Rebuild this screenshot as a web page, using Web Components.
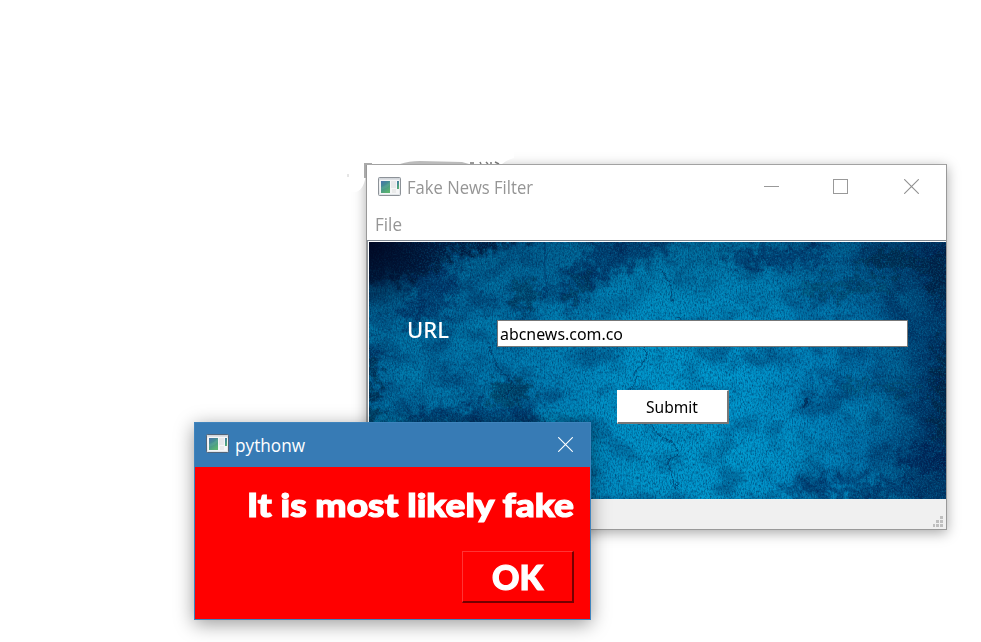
<!DOCTYPE html>
<html lang="en">
<head>
<meta charset="utf-8">
<title>Fake News Filter</title>
<style>
html, body { margin: 0; width: 981px; height: 642px; overflow: hidden; background: #fff; }
</style>
</head>
<body>
<filter-desktop></filter-desktop>
<script>
const define = (name, html, after) => customElements.define(name, class extends HTMLElement {
  connectedCallback() {
    if (this.shadowRoot) return;
    const t = document.createElement('template');
    t.innerHTML = html;
    this.attachShadow({ mode: 'open' }).append(t.content.cloneNode(true));
    if (after) after(this);
  }
});

/* Text scaled horizontally to the width given by its "w" attribute. */
define('fit-text', `<style>
  :host { display: block; white-space: nowrap; flex: none; }
  span { display: inline-block; transform-origin: 0 50%; }
</style><span><slot></slot></span>`, el => {
  const w = +el.getAttribute('w');
  el.style.width = w + 'px';
  const s = el.shadowRoot.querySelector('span');
  s.style.transform = 'scaleX(' + w / s.getBoundingClientRect().width + ')';
});

define('app-icon', `<style>:host { display: block; flex: none; width: 23px; height: 19px; } svg { display: block; }</style>
<svg width="23" height="19" viewBox="0 0 23 19">
  <defs><linearGradient id="g" x1="0" y1="0" x2=".6" y2="1"><stop offset="0" stop-color="#4872ad"/><stop offset=".5" stop-color="#45928d"/><stop offset="1" stop-color="#5bb371"/></linearGradient>
  <linearGradient id="f" x1="0" y1="0" x2="0" y2="1"><stop offset="0" stop-color="#c9ced4"/><stop offset=".25" stop-color="#f5f5f5"/><stop offset="1" stop-color="#dfe3e7"/></linearGradient></defs>
  <rect x=".5" y=".5" width="22" height="18" rx="1" fill="url(#f)" stroke="var(--frame, #8d9298)"/>
  <rect x="2" y="3" width="19" height="14" fill="#f5f6f7"/>
  <rect x="3" y="4" width="9" height="12" fill="url(#g)"/>
  <path d="M3 10Q8 9 12 4V8Q8 12 3 13Z" fill="#79bba2" opacity=".25"/>
  <rect x="13" y="4" width="5" height="7" fill="#e6e8e9"/><rect x="14" y="12" width="4" height="4" fill="#e9eaea"/>
  <rect x="19" y="4" width="2" height="8" fill="url(#g)"/>
</svg>`);

define('window-close', `<style>:host { display: block; flex: none; width: 15px; height: 15px; } svg { display: block; }</style>
<svg width="15" height="15" viewBox="0 0 15 15"><path d="M.2 .2L14.8 14.8M14.8 .2L.2 14.8" stroke="currentColor" stroke-width="1.1"/></svg>`);

define('window-controls', `<style>
  :host { display: flex; align-items: center; gap: 54px; color: #909090; }
  i { display: block; width: 15px; height: 15px; box-sizing: border-box; }
  .min { background: linear-gradient(#999, #999) 0 7px / 15px 1px no-repeat; }
  .max { border: 1px solid #999; }
  window-close { margin-left: 2px; }
</style><i class="min"></i><i class="max"></i><window-close></window-close>`);

define('grunge-backdrop', `<style>:host { display: block; } svg { display: block; }</style>
<svg width="577" height="257" viewBox="0 0 577 257">
  <defs>
    <linearGradient id="base"><stop offset="0" stop-color="#006798"/><stop offset=".3" stop-color="#007bb0"/><stop offset=".5" stop-color="#0094c8"/><stop offset=".64" stop-color="#0096cc"/><stop offset=".8" stop-color="#007cb4"/><stop offset="1" stop-color="#005084"/></linearGradient>
    <linearGradient id="top" x1="0" y1="0" x2="0" y2="1"><stop offset="0" stop-color="#002348" stop-opacity=".4"/><stop offset=".25" stop-color="#002348" stop-opacity=".12"/><stop offset=".5" stop-color="#002348" stop-opacity="0"/></linearGradient>
    <linearGradient id="right"><stop offset=".86" stop-color="#001b45" stop-opacity="0"/><stop offset="1" stop-color="#001b45" stop-opacity=".5"/></linearGradient>
    <radialGradient id="corner" gradientUnits="userSpaceOnUse" cx="0" cy="0" r="75"><stop offset="0" stop-color="#000620" stop-opacity=".9"/><stop offset=".4" stop-color="#000a26" stop-opacity=".65"/><stop offset="1" stop-color="#000a26" stop-opacity="0"/></radialGradient>
    <filter id="blotch" x="0" y="0" width="100%" height="100%" color-interpolation-filters="sRGB"><feTurbulence type="fractalNoise" baseFrequency=".035 .04" numOctaves="6" seed="8"/><feColorMatrix values="0 0 0 0 0  0 0 0 0 .1  0 0 0 0 .28  3.4 0 0 0 -1.5"/></filter>
    <filter id="light" x="0" y="0" width="100%" height="100%" color-interpolation-filters="sRGB"><feTurbulence type="fractalNoise" baseFrequency=".02 .026" numOctaves="6" seed="21"/><feColorMatrix values="0 0 0 0 .02  0 0 0 0 .62  0 0 0 0 .8  0 3 0 0 -1.35"/></filter>
    <filter id="grain" x="0" y="0" width="100%" height="100%" color-interpolation-filters="sRGB"><feTurbulence type="fractalNoise" baseFrequency=".73 .37" numOctaves="2" seed="3"/><feColorMatrix values="0 0 0 0 0  0 0 0 0 .12  0 0 0 0 .3  2 0 0 0 -.8"/></filter>
    <filter id="spark" x="0" y="0" width="100%" height="100%" color-interpolation-filters="sRGB"><feTurbulence type="fractalNoise" baseFrequency=".67 .57" numOctaves="2" seed="17"/><feColorMatrix values="0 0 0 0 .04  0 0 0 0 .7  0 0 0 0 .9  0 2 0 0 -.88"/></filter>
    <filter id="rough" x="-30%" y="-30%" width="160%" height="160%"><feGaussianBlur stdDeviation="5" result="b"/><feTurbulence type="fractalNoise" baseFrequency=".12" numOctaves="5" seed="5" result="n"/><feDisplacementMap in="b" in2="n" scale="42" xChannelSelector="R" yChannelSelector="G"/></filter>
    <filter id="jag"><feTurbulence type="fractalNoise" baseFrequency=".2" numOctaves="3" seed="7"/><feDisplacementMap in="SourceGraphic" scale="5" xChannelSelector="R" yChannelSelector="G"/></filter>
    <filter id="soft" x="-50%" y="-50%" width="200%" height="200%"><feGaussianBlur stdDeviation="16"/></filter>
  </defs>
  <rect width="577" height="257" fill="url(#base)"/>
  <rect width="577" height="257" filter="url(#light)" opacity=".3"/>
  <rect width="577" height="257" filter="url(#blotch)" opacity=".36"/>
  <rect width="577" height="257" fill="url(#top)"/><rect width="577" height="257" fill="url(#right)"/>
  <g filter="url(#soft)" fill="#009bd0" opacity=".32"><ellipse cx="275" cy="65" rx="45" ry="35"/><ellipse cx="290" cy="165" rx="65" ry="75"/><ellipse cx="385" cy="60" rx="35" ry="30"/><ellipse cx="390" cy="205" rx="65" ry="30"/></g>
  <g filter="url(#rough)" fill="#00102e">
    <path d="M-20-20H170L130 8L80 15L60 33L18 38L-20 45Z" opacity=".8"/>
    <ellipse cx="65" cy="42" rx="24" ry="18" opacity=".4"/>
    <ellipse cx="156" cy="54" rx="14" ry="16" opacity=".45"/>
    <ellipse cx="205" cy="48" rx="14" ry="22" opacity=".25"/>
    <ellipse cx="55" cy="72" rx="25" ry="9" opacity=".4"/>
    <ellipse cx="140" cy="150" rx="22" ry="13" opacity=".5"/>
    <ellipse cx="105" cy="178" rx="70" ry="14" opacity=".4"/>
    <ellipse cx="-2" cy="145" rx="10" ry="48" opacity=".6"/>
    <path d="M235-10H320L260 25L220 45L198 75L205 35Z" opacity=".4"/>
    <ellipse cx="405" cy="14" rx="55" ry="10" opacity=".4"/>
    <ellipse cx="525" cy="19" rx="35" ry="11" opacity=".5"/>
    <ellipse cx="575" cy="36" rx="18" ry="25" opacity=".55"/>
    <ellipse cx="475" cy="46" rx="50" ry="8" opacity=".35"/>
    <ellipse cx="510" cy="145" rx="65" ry="5" opacity=".35"/>
    <ellipse cx="577" cy="150" rx="12" ry="58" opacity=".5"/>
    <ellipse cx="480" cy="247" rx="75" ry="8" opacity=".4"/>
    <ellipse cx="558" cy="217" rx="30" ry="13" opacity=".4"/>
  </g>
  <rect width="577" height="257" filter="url(#grain)" opacity=".62"/>
  <rect width="577" height="257" filter="url(#spark)" opacity=".34"/>
  <rect width="577" height="257" fill="url(#corner)"/>
  <g filter="url(#jag)" fill="none" stroke="#00204a" stroke-width=".8" opacity=".7">
    <path d="M176 0V54M291 26L302 42L303 59M309 75L319 84M273 97L278 115L264 133M120 104L128 124L145 144L132 157M270 133L260 152M276 177L293 196L306 202L309 213L299 219L306 247"/>
    <path d="M443 133L444 152L438 165M16 10V54" opacity=".6"/>
    <circle cx="304" cy="58" r="1"/><circle cx="308" cy="243" r="1.8"/><circle cx="113" cy="50" r="1.2"/><circle cx="126" cy="58" r="1.2"/>
    <path d="M438 157L434 166" stroke-width="2"/>
  </g>
</svg>`);

define('main-window', `<style>
  :host { display: flex; flex-direction: column; box-sizing: border-box; width: 581px; height: 366px; background: #fff; border: 1px solid #999; border-color: #a2a2a2 #999 #999; box-shadow: 0 3px 12px rgba(0,0,0,.34); color: #959595; font-family: "Open Sans", "Noto Sans", sans-serif; }
  .title { display: flex; height: 43px; align-items: center; padding: 0 27px 0 11px; box-sizing: border-box; }
  app-icon { margin-top: -1px; }
  .title fit-text { margin: 1px auto 0 6px; }
  .menu { height: 32px; box-sizing: border-box; padding-left: 8px; display: flex; align-items: center; }
  .title fit-text, .menu fit-text { font-size: 18px; line-height: 24px; font-weight: 400; }
  .body { border-top: 1px solid #7f8790; border-left: 1px solid #8c9298; padding: 1px 0 0 1px; height: 257px; display: grid; }
  grunge-backdrop, .form { grid-area: 1 / 1; }
  .form { position: relative; display: flex; flex-direction: column; padding: 78px 38px 0; }
  .row { display: flex; align-items: center; height: 27px; justify-content: space-between; color: #fff; }
  .row > fit-text { font: 500 22px/26px "Noto Sans", sans-serif; margin-top: -9px; }
  .input { width: 411px; height: 27px; box-sizing: border-box; background: #fff; border: 1px solid #777; padding-left: 2px; color: #000; font: 400 16.5px/26px "Noto Sans", sans-serif; }
  .submit { width: 112px; height: 34px; box-sizing: border-box; margin: 43px 0 0 210px; border: solid; border-width: 1px 2px 2px 1px; border-color: #fff #777 #777 #fff; background: #fff; display: flex; align-items: center; justify-content: center; color: #000; font: 400 16.5px/24px "Noto Sans", sans-serif; }
  .submit fit-text { margin: 1px 1px 0 0; }
  .status { flex: 1; background: #f0f0f0; display: flex; align-items: flex-end; justify-content: flex-end; padding: 0 3px 2px 0; }
  .status svg { display: block; }
</style>
<div class="title"><app-icon></app-icon><fit-text w="126">Fake News Filter</fit-text><window-controls></window-controls></div>
<div class="menu"><fit-text w="27">File</fit-text></div>
<div class="body"><grunge-backdrop></grunge-backdrop>
  <div class="form"><div class="row"><fit-text w="42">URL</fit-text><div class="input"><fit-text w="123">abcnews.com.co</fit-text></div></div>
  <div class="submit"><fit-text w="52">Submit</fit-text></div></div></div>
<div class="status"><svg width="10" height="11" fill="#bfbfbf"><path d="M7 0h3v3H7zM3 4h3v3H3zM7 4h3v3H7zM0 8h2v3H0zM3 8h3v3H3zM7 8h3v3H7z"/></svg></div>`);

define('result-dialog', `<style>
  :host { display: flex; flex-direction: column; box-sizing: border-box; width: 397px; height: 198px; background: #f00; border: 1px solid #3f84bd; box-shadow: 0 4px 18px rgba(0,0,0,.4); color: #fff; --frame: #526579; }
  .title { height: 44px; background: #377bb5; display: flex; align-items: center; padding: 0 17px 0 11px; font: 400 18px/24px "Open Sans", "Noto Sans", sans-serif; }
  app-icon { margin-top: -3px; }
  window-close { margin-top: -2px; }
  .title fit-text { margin: -1px auto 0 6px; }
  .content { flex: 1; display: flex; flex-direction: column; align-items: flex-end; padding: 16px 16px 0 0; font-family: Lato, sans-serif; font-weight: 900; }
  .content fit-text { -webkit-text-stroke: 1.2px #fff; }
  .message { font-size: 33px; line-height: 42px; }
  .ok { box-sizing: border-box; width: 112px; height: 52px; margin-top: 26px; border: solid; border-width: 1px 2px 2px 1px; border-color: #ff3434 #760000 #760000 #ff3434; display: flex; align-items: center; justify-content: center; font-size: 34px; line-height: 42px; }
</style>
<div class="title"><app-icon></app-icon><fit-text w="70">pythonw</fit-text><window-close></window-close></div>
<div class="content"><fit-text class="message" w="327">It is most likely fake</fit-text><div class="ok"><fit-text w="51">OK</fit-text></div></div>`);

define('filter-desktop', `<style>
  :host { display: block; position: relative; width: 981px; height: 642px; overflow: hidden; background: #fff; }
  main-window { position: absolute; left: 366px; top: 164px; }
  result-dialog { position: absolute; left: 194px; top: 422px; }
  svg { position: absolute; left: 340px; top: 140px; }
</style>
<main-window></main-window>
<svg width="180" height="56">
  <path d="M0 0H174V18Q166 20 162 24H26V32Q25 49 16 52H0Z" fill="#fff"/>
  <path d="M25 38V24H32" stroke="#aaa" stroke-width="2" fill="none"/>
  <path d="M60 24Q69 21 80 21L122 22L129 24Z" fill="#bbb"/>
  <path d="M130 23h4M141 24l-1-2M146 22l2 2M151 22v2M155 22l4 2" stroke="#777" stroke-width="1.5" fill="none"/>
  <path d="M48 24.5H174" stroke="#a2a2a2"/><path d="M8 34v3" stroke="#ccc"/>
</svg>
<result-dialog></result-dialog>`);
</script>
</body>
</html>
